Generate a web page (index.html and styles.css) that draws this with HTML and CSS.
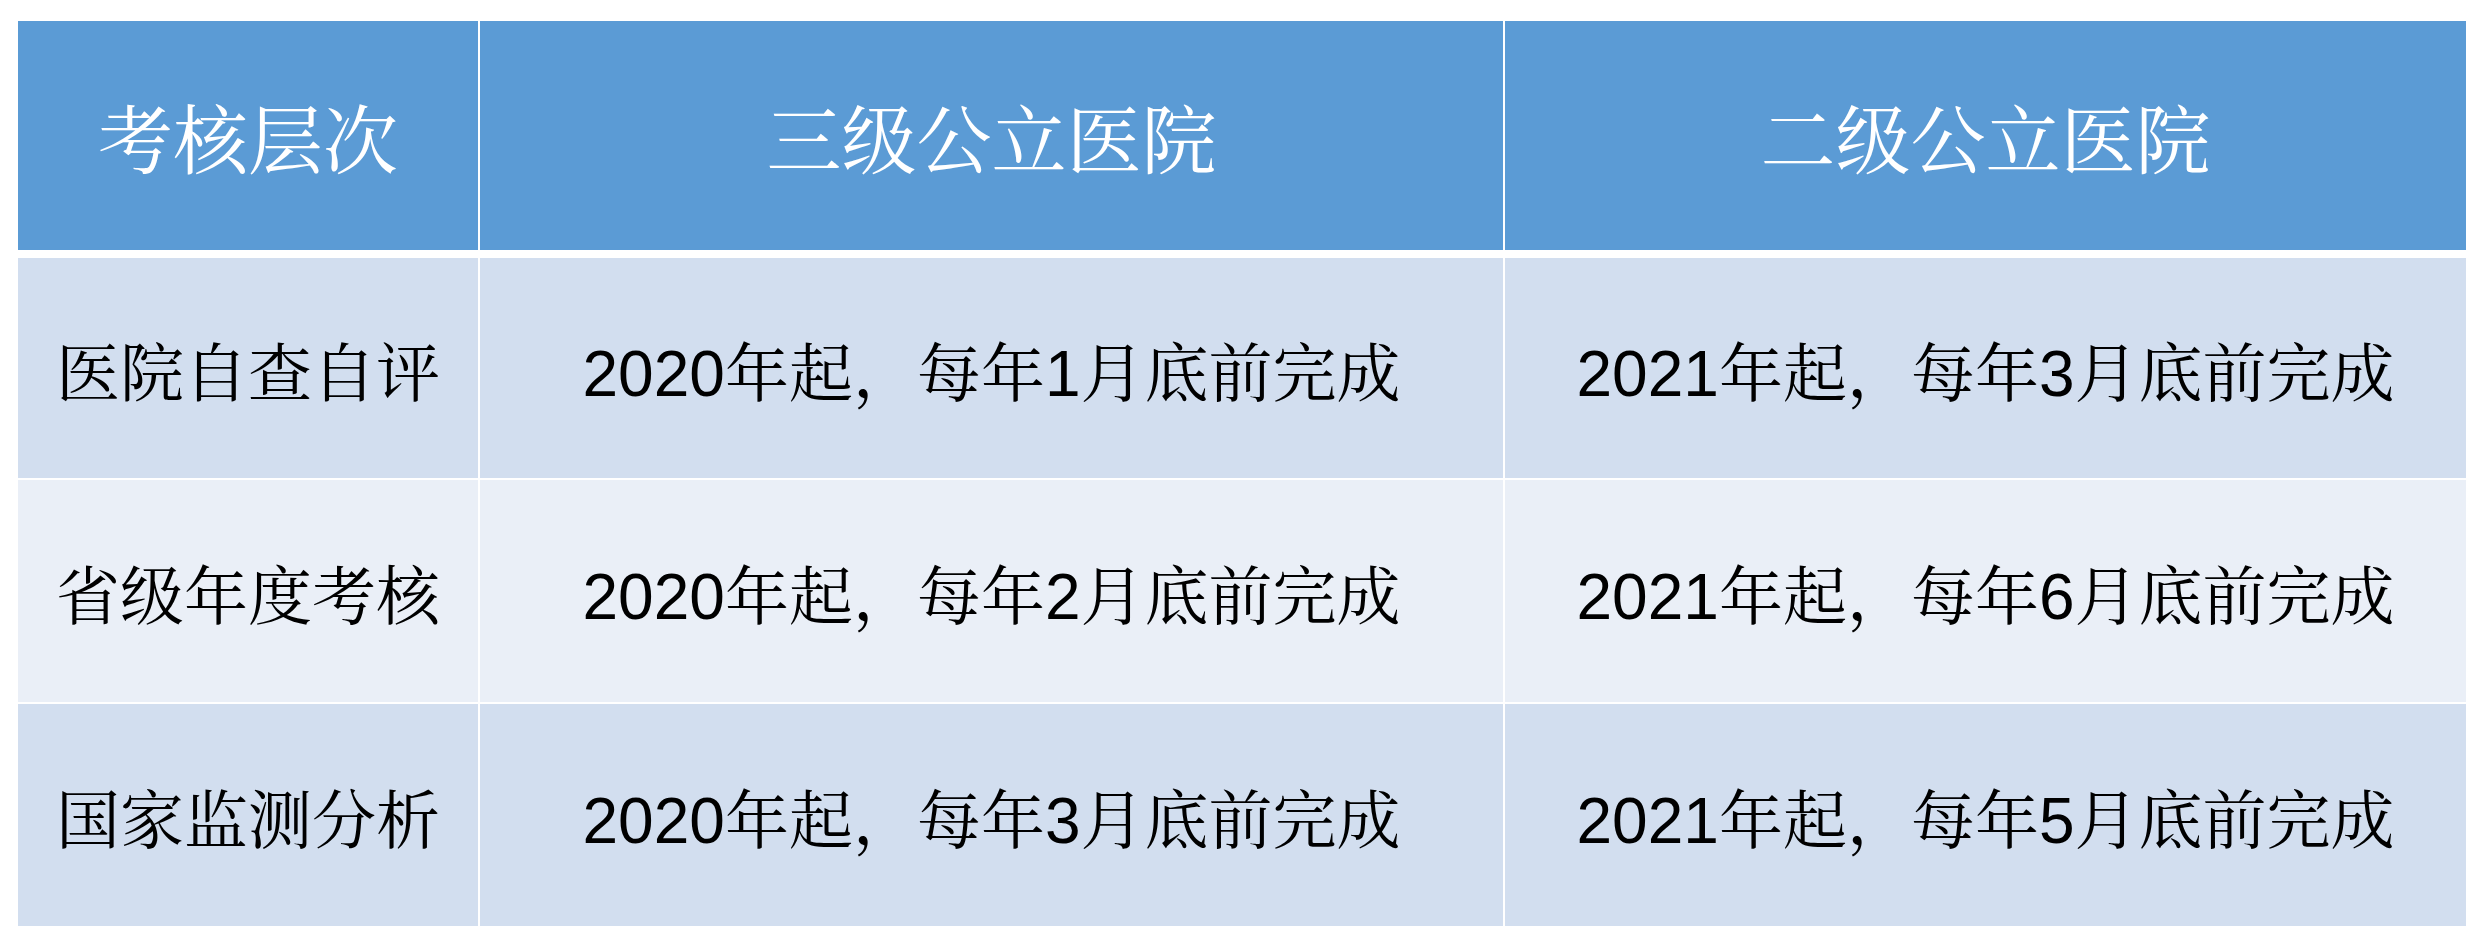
FILE: index.html
```html
<!DOCTYPE html>
<html lang="zh-CN">
<head>
<meta charset="utf-8">
<title>考核层次</title>
<link rel="stylesheet" href="styles.css">
</head>
<body>
<div class="page">
  <div class="table">
    <div class="row head">
      <div class="cell">考核层次</div>
      <div class="cell">三级公立医院</div>
      <div class="cell">二级公立医院</div>
    </div>
    <div class="body">
      <div class="row band1">
        <div class="cell label">医院自查自评</div>
        <div class="cell data">2020年起，每年1月底前完成</div>
        <div class="cell data">2021年起，每年3月底前完成</div>
      </div>
      <div class="row band2">
        <div class="cell label">省级年度考核</div>
        <div class="cell data">2020年起，每年2月底前完成</div>
        <div class="cell data">2021年起，每年6月底前完成</div>
      </div>
      <div class="row band1">
        <div class="cell label">国家监测分析</div>
        <div class="cell data">2020年起，每年3月底前完成</div>
        <div class="cell data">2021年起，每年5月底前完成</div>
      </div>
    </div>
  </div>
</div>
</body>
</html>
```

FILE: styles.css
```css
html, body {
  margin: 0;
  padding: 0;
  background: #ffffff;
}

.page {
  padding: 21px 0 0 18px;
}

.table {
  display: flex;
  flex-direction: column;
  width: 2448px;
}

.row {
  display: grid;
  grid-template-columns: 460px 1023px 961px;
  column-gap: 2px;
}

.cell {
  display: flex;
  align-items: center;
  justify-content: center;
  white-space: nowrap;
}

.head {
  height: 229px;
  margin-bottom: 8px;
}

.head .cell {
  background: #5b9bd5;
  color: #ffffff;
  font-family: "Noto Serif CJK SC", "Noto Sans CJK SC", serif;
  font-size: 75px;
}

.body {
  display: flex;
  flex-direction: column;
  gap: 2px;
}

.body .row {
  height: 222px;
}

.body .row:first-child {
  height: 220px;
}

.band1 .cell {
  background: #d2deef;
}

.band2 .cell {
  background: #eaeff7;
}

.label {
  color: #000000;
  font-family: "Noto Serif CJK SC", "Noto Sans CJK SC", serif;
  font-size: 64px;
}

.data {
  color: #000000;
  font-family: "Liberation Sans", "Noto Serif CJK SC", "Noto Sans CJK SC", sans-serif;
  font-size: 64px;
}
```
